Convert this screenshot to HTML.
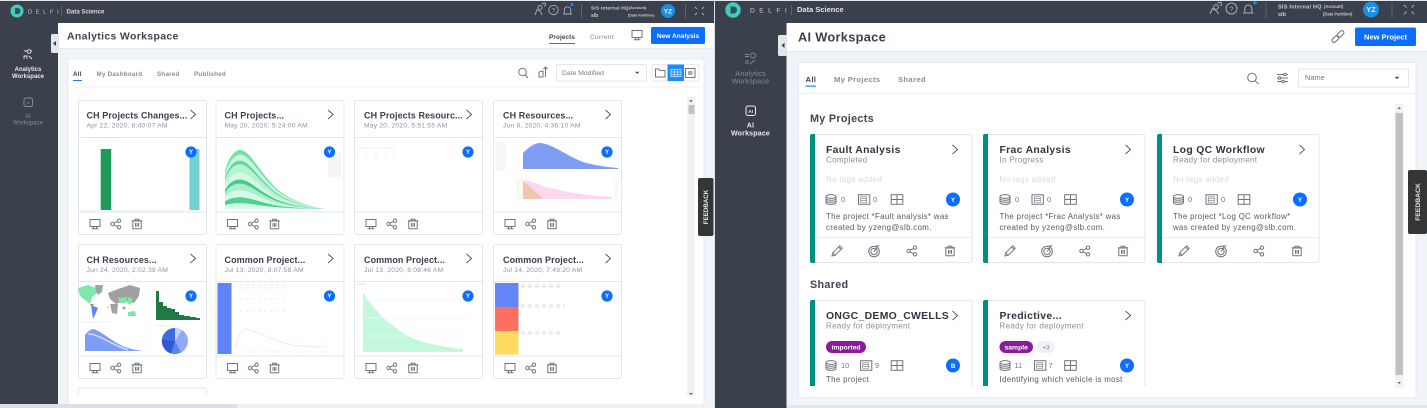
<!DOCTYPE html>
<html lang="en"><head><meta charset="utf-8"><title>Workspaces</title>
<style>
html,body{margin:0;padding:0;width:1427px;height:408px;overflow:hidden;background:#f0f3f8}
svg{display:block;font-family:"Liberation Sans",sans-serif;filter:blur(.3px)}
.t{font-size:9px;font-weight:700;fill:#3a414d;letter-spacing:.08px}
.d{font-size:6.7px;fill:#8d929b;letter-spacing:.22px}
.tab{font-size:6.3px;font-weight:700;fill:#8a8f97;letter-spacing:.2px}
.rtab{font-size:7.7px;font-weight:700;fill:#8a8f97;letter-spacing:.3px}
.rt{font-size:10.4px;font-weight:700;fill:#30363f;letter-spacing:.33px}
.rs{font-size:8px;fill:#8a8f98;letter-spacing:.3px}
.rn{font-size:8px;fill:#d6dae0;letter-spacing:.3px}
.rd{font-size:7.9px;fill:#555a63;letter-spacing:.33px}
.rc{font-size:7.4px;fill:#70757e}
.av{font-size:6px;font-weight:700;fill:#fff;text-anchor:middle}
.ic{fill:none;stroke:#6f747d;stroke-width:1}
</style></head><body>
<svg width="1427" height="408" viewBox="0 0 1427 408" xmlns="http://www.w3.org/2000/svg">
<defs>
<g id="mon" class="ic"><rect x="-5" y="-4.5" width="10" height="7"/><path d="M-1.5 2.5V4.5M1.5 2.5V4.5M-3.5 4.7H3.5"/></g>
<g id="share" class="ic"><circle cx="-3.5" cy="0" r="1.7"/><circle cx="3" cy="-3.3" r="1.7"/><circle cx="3" cy="3.3" r="1.7"/><path d="M-2 -.8L1.5 -2.6M-2 .8L1.5 2.6"/></g>
<g id="trash" class="ic"><rect x="-4.2" y="-3" width="8.4" height="7.800" rx=".6"/><path d="M-5.200 -3.2H5.200M-2 -3.2V-4.8H2V-3.2M-1.5 -1V2.7M1.500 -1V2.7M0 -1V2.7"/></g>
<g id="pen" class="ic"><path d="M-5 5L-4.200 1.700L2.700 -5.200L5.200 -2.700L-1.700 4.200ZM-4.200 1.700L-1.700 4.200M1.500 -4L4 -1.500"/></g>
<g id="gauge" class="ic"><circle cx="0" cy=".5" r="5.300"/><circle cx="0" cy=".5" r="3.200"/><path d="M0 .5L3.200 -3.800M2 -5.300L5.500 -5"/></g>
<g id="db" class="ic"><ellipse cx="0" cy="-3" rx="5" ry="1.900"/><path d="M-5 -3V3C-5 5.500 5 5.500 5 3V-3M-5 -1C-5 1.300 5 1.300 5 -1M-5 1C-5 3.300 5 3.300 5 1"/></g>
<g id="doc" class="ic"><path d="M-5.500 -4.800H5.800V4.800H-5.500Z"/><path d="M-3.300 -2.700H2.800V3H-3.300ZM-3.300 -.8H2.800M-3.300 1.100H2.800" stroke-width=".6"/></g>
<g id="grd" class="ic"><rect x="-5.800" y="-4.800" width="11.600" height="9.600"/><path d="M0 -4.800V4.800M-5.800 0H5.800"/></g>
<g id="chev"><path d="M-2.500 -4.500L2.500 0L-2.500 4.500" fill="none" stroke="#555b64" stroke-width="1"/></g>
<g id="lcard"><rect x=".5" y=".5" width="128" height="134" rx="2" fill="#fff" stroke="#e2e5eb"/>
<path d="M1 37.500H128M1 112H128" stroke="#e2e5eb"/>
<use href="#mon" x="17" y="124"/><use href="#share" x="38" y="124"/><use href="#trash" x="59" y="124"/><use href="#chev" x="115" y="14.500"/></g>
<g id="rcard"><rect x=".5" y=".5" width="161.500" height="128" rx="2" fill="#fff" stroke="#e2e5eb"/>
<path d="M5 0H2Q0 0 0 2V127Q0 129 2 129H5Z" fill="#00907f"/><use href="#chev" x="145" y="15.500"/></g>
<g id="rcard2"><path d="M.5 86V2Q.5 .5 2 .5H160.500Q162 .5 162 2V86Z" fill="#fff"/><path d="M.5 86V2Q.5 .5 2 .5H160.500Q162 .5 162 2V86" fill="none" stroke="#e2e5eb"/>
<path d="M5 0H2Q0 0 0 2V86H5Z" fill="#00907f"/><use href="#chev" x="145" y="15.500"/></g>
<g id="rfoot"><path d="M5 103.500H162" stroke="#e8ebf0"/><use href="#pen" x="27" y="117"/><use href="#gauge" x="64" y="117"/><use href="#share" x="102" y="117"/><use href="#trash" x="140" y="117"/></g>
<path id="bell" d="M0 0V-38C3 -50 9 -59 15 -59C25 -59 32 -40 50 -22C62 -10 82 -3 100 0Z"/>
</defs>

<!-- LEFT PANEL -->
<rect x="0" y="0" width="714" height="408" fill="#f0f3f8"/>
<rect x="0" y="1" width="714" height="22" fill="#3a414d"/>
<rect x="0" y="0" width="714" height="1" fill="#e6e7ea"/>
<rect x="0" y="22" width="58" height="382" fill="#3a414d"/>
<circle cx="17" cy="11" r="6.500" fill="#42cdb8"/><path d="M15 8H17.500A3 3 0 0 1 17.500 14H15Z" fill="#36505a"/>
<text x="28" y="13.500" font-size="5.600" fill="#c9ccd2" letter-spacing="3.700">DELFI</text>
<path d="M61.500 6V16" stroke="#5b636f"/>
<text x="66.500" y="13.500" font-size="6.100" font-weight="700" fill="#d8dbdf">Data Science</text>
<g fill="none" stroke="#a9aeb6" stroke-width=".9"><circle cx="540" cy="7.500" r="2"/><path d="M535 15L537 9.500L540.500 11.500M540.500 11.500L542 15M542.500 4.500A1.500 1.500 0 1 1 544 6"/><circle cx="553.500" cy="10" r="4.700"/><path d="M563 14H572M564.300 14V10A3.200 3.200 0 0 1 570.700 10V14"/></g>
<text x="553.500" y="12.300" font-size="6.500" fill="#a9aeb6" text-anchor="middle">?</text>
<circle cx="572" cy="4.500" r="1.700" fill="#1a7ff0"/>
<path d="M581.500 4V18M685.500 4V18" stroke="#5b636f"/>
<text x="591" y="9.600" font-size="4.900" fill="#c9ccd2" font-weight="700" letter-spacing=".15">SIS Internal HQ</text>
<text x="629" y="9.200" font-size="3.700" fill="#c9ccd2" font-weight="700">(Account)</text>
<text x="591" y="16.800" font-size="5" fill="#c9ccd2" font-weight="700">slb</text>
<text x="628" y="16.400" font-size="3.700" fill="#c9ccd2" font-weight="700">(Data Partition)</text>
<circle cx="668" cy="11" r="7" fill="#1a8fe3"/><text x="668" y="13.300" font-size="6.400" font-weight="700" fill="#e8f4fd" text-anchor="middle">YZ</text>
<path d="M695 7L697 9M704 7L702 9M695 15L697 13M704 15L702 13" stroke="#a9aeb6" fill="none"/>

<rect x="58" y="23" width="656" height="25" fill="#fff"/>
<path d="M58 48.500H714" stroke="#e6e9ee"/>
<rect x="51" y="34" width="8" height="19" rx="1.500" fill="#e4e6ea"/><path d="M56 41L53 43.500L56 46Z" fill="#39404b"/>
<text x="67" y="39.500" font-size="10.500" font-weight="700" fill="#3e4550" letter-spacing=".33">Analytics Workspace</text>
<text x="549" y="39" font-size="6.300" font-weight="700" fill="#3a414d" letter-spacing=".15">Projects</text>
<rect x="549" y="43" width="26" height="1" fill="#1a7ff0"/>
<text x="590" y="39" font-size="6.300" font-weight="700" fill="#a5a9b1" letter-spacing=".15">Current</text>
<use href="#mon" x="637" y="35"/>
<rect x="651" y="27" width="54" height="17" rx="1.500" fill="#0d6efd"/>
<text x="678" y="38" font-size="6.600" font-weight="700" fill="#fff" text-anchor="middle">New Analysis</text>

<g fill="none" stroke="#e8eaed" stroke-width=".9"><path d="M24 51H27M30.500 51H32M24 59V56H27V59M29 56L32 59"/><circle cx="29" cy="51.500" r="1.800"/></g>
<g font-size="6" font-weight="700" fill="#e6e8eb" text-anchor="middle"><text x="28" y="71.200">Analytics</text><text x="28" y="77.800">Workspace</text></g>
<rect x="24" y="98" width="8.500" height="8.500" rx="2" fill="none" stroke="#868c95"/><text x="28.200" y="104" font-size="4" fill="#868c95" text-anchor="middle">AI</text>
<g font-size="6" fill="#868c95" text-anchor="middle"><text x="28" y="118">AI</text><text x="28" y="124.500">Workspace</text></g>

<rect x="68" y="59" width="636" height="346" fill="#fff" stroke="#e7eaef"/>
<path d="M68 87H704" stroke="#eef0f4"/>
<text x="73" y="76" class="tab" style="fill:#3a414d">All</text>
<rect x="73" y="80" width="9" height="1" fill="#1a7ff0"/>
<text x="96.500" y="76" class="tab">My Dashboard</text><text x="157" y="76" class="tab">Shared</text><text x="194" y="76" class="tab">Published</text>
<g class="ic"><circle cx="522.500" cy="72" r="3.800"/><path d="M525.300 75L528 78"/><path d="M539 77V72L543 71V77ZM545.500 77V67M543.500 69L545.500 67L547.500 69"/></g>
<rect x="556.500" y="64.500" width="90" height="16.500" rx="1.500" fill="#fff" stroke="#e4e7ec"/>
<text x="562" y="75" font-size="6.800" fill="#777c85">Date Modified</text><path d="M635 71.700H639.500L637.200 74Z" fill="#4d525a"/>
<rect x="652" y="64.500" width="47" height="16.500" rx="1.500" fill="#fff" stroke="#e6e8ed"/>
<path d="M655.500 77V69H659L660 70.500H665V77Z" class="ic"/>
<rect x="667.500" y="64.500" width="16.500" height="16.500" fill="#1a8cff"/>
<path d="M671 69.500H681V76.500H671ZM671 72H681M671 74.300H681M674.300 69.500V76.500M677.700 69.500V76.500" fill="none" stroke="#d6ebff" stroke-width=".7"/>
<rect x="685.500" y="68.500" width="9.500" height="9" class="ic"/><rect x="688" y="71" width="4.500" height="4" fill="#a4a8ae"/>
<rect x="687" y="97" width="8" height="299" fill="#f2f2f2"/><rect x="688.500" y="105" width="6" height="9" fill="#c1c1c1"/>
<path d="M689 101.500L691 99.500L693 101.500ZM689 393L691 395L693 393Z" fill="#606060"/>

<!-- left cards row 1 -->
<g transform="translate(78,100)"><use href="#lcard"/><text x="8.500" y="18.500" class="t">CH Projects Changes...</text><text x="8.500" y="27.500" class="d">Apr 22, 2020, 8:40:07 AM</text></g>
<g transform="translate(215.500,100)"><use href="#lcard"/><text x="9" y="18.500" class="t">CH Projects...</text><text x="9" y="27.500" class="d">May 20, 2020, 5:24:00 AM</text></g>
<g transform="translate(354,100)"><use href="#lcard"/><text x="10" y="18.500" class="t">CH Projects Resourc...</text><text x="10" y="27.500" class="d">May 20, 2020, 5:51:55 AM</text></g>
<g transform="translate(493,100)"><use href="#lcard"/><text x="10" y="18.500" class="t">CH Resources...</text><text x="10" y="27.500" class="d">Jun 8, 2020, 4:36:10 AM</text></g>
<!-- charts row 1 -->
<rect x="100.700" y="149" width="10.500" height="61" fill="#1f9c5a"/>
<rect x="189.500" y="149" width="10" height="61" fill="#70d0d2"/>
<path d="M80 210.500H200M82 141H120" stroke="#f0f2f3" stroke-width=".7"/>
<g transform="translate(225,209)">
<use href="#bell" fill="#72e2aa"/><use href="#bell" fill="#c8f6de" transform="scale(1,.92)"/><use href="#bell" fill="#5fd699" transform="scale(.98,.82)"/><use href="#bell" fill="#b5f2d2" transform="scale(.98,.76)"/><use href="#bell" fill="#d5f9e6" transform="scale(.97,.62)"/><use href="#bell" fill="#4cc98a" transform="scale(.97,.5)"/><use href="#bell" fill="#a5efc9" transform="scale(.96,.43)"/><use href="#bell" fill="#d5f9e6" transform="scale(.96,.32)"/><use href="#bell" fill="#52cf91" transform="scale(.95,.2)"/><use href="#bell" fill="#d5f9e6" transform="scale(.95,.1)"/>
</g>
<path d="M328 152H341V177H328Z" fill="#f5f5f5"/>
<path d="M358 148H395M357 150V158M366 150V158M376 150V158M386 150V158M394 150V158" stroke="#eeeeee" stroke-width=".8" fill="none"/>
<path d="M523 169V153C530 146 535 143 540 143C553 144 565 155 583 162C597 166 608 167 618 168V169Z" fill="#7f9df5"/>
<path d="M495 142H506V170H495Z" fill="#f6f6f7"/>
<path d="M523 199V180C533 181 540 186 550 188C565 192 590 196 612 197V199Z" fill="#fbd7f0"/>
<path d="M523 199V182C530 185 537 194 543 199Z" fill="#f0c7ae"/>
<path d="M516 178H523V199H516ZM615 179H618V199H615Z" fill="#fbf8ee"/>
<!-- avatars row 1 -->
<g fill="#0d6efd"><circle cx="191" cy="152" r="5.600"/><circle cx="329.500" cy="152" r="5.600"/><circle cx="468" cy="152" r="5.600"/><circle cx="607" cy="152" r="5.600"/></g>
<g class="av"><text x="191" y="154.200">Y</text><text x="329.500" y="154.200">Y</text><text x="468" y="154.200">Y</text><text x="607" y="154.200">Y</text></g>

<!-- left cards row 2 -->
<g transform="translate(78,244)"><use href="#lcard"/><text x="8.500" y="19" class="t">CH Resources...</text><text x="8.500" y="28" class="d">Jun 24, 2020, 2:02:39 AM</text></g>
<g transform="translate(215.500,244)"><use href="#lcard"/><text x="9" y="19" class="t">Common Project...</text><text x="9" y="28" class="d">Jul 13, 2020, 8:07:58 AM</text></g>
<g transform="translate(354,244)"><use href="#lcard"/><text x="10" y="19" class="t">Common Project...</text><text x="10" y="28" class="d">Jul 13, 2020, 8:08:46 AM</text></g>
<g transform="translate(493,244)"><use href="#lcard"/><text x="10" y="19" class="t">Common Project...</text><text x="10" y="28" class="d">Jul 14, 2020, 7:49:20 AM</text></g>
<!-- map card -->
<path d="M78 288L88 285L96 288L97 293L92 297L90 304L85 300L80 296Z" fill="#7ce8ab"/>
<path d="M95 285H103L102 292L98 295L96 291Z" fill="#a2a2a2"/>
<path d="M91 305L98 308L95 315L93 319L92 312Z" fill="#5c86f0"/><path d="M90 304L94 304L92 308Z" fill="#999"/>
<path d="M108 293L118 289L130 285L140 288L139 296L134 303L124 301L116 304L110 299Z" fill="#a0a0a0"/>
<path d="M118 298L127 297L126 303L120 303ZM128 297L133 299L130 305L127 303Z" fill="#7ce8ab"/>
<path d="M110 304L118 304L117 314L112 313Z" fill="#a2a2a2"/>
<path d="M128 312L135 311L136 316L128 316Z" fill="#7ce8ab"/><circle cx="124" cy="308" r="1.500" fill="#f3887a"/><circle cx="108" cy="307" r="1" fill="#f3c26a"/>
<path d="M156 291H159V320H156ZM159 302H163V320H159ZM163 306H167V320H163ZM167 308H171V320H167ZM171 309H175V320H171ZM175 312H179V320H175ZM179 315H184V320H179ZM184 316H190V320H184ZM190 317H196V320H190ZM196 318H200V320H196Z" fill="#1f7a45"/>
<path d="M85 351V335C88 331 91 329 94 329C104 333 115 344 128 348C134 350 138 350 142 351Z" fill="#7d9ef5"/>
<path d="M88 334C97 333 110 344 128 350" stroke="#cfdcfc" fill="none" stroke-width="1.500"/>
<path d="M80 322H110M155 326H178" stroke="#eceeef" stroke-width=".7"/>
<circle cx="175" cy="341" r="13" fill="#8fabf8"/><path d="M175 341V328A13 13 0 0 1 182 330Z" fill="#c5d3fb"/><path d="M175 341L162 339A13 13 0 0 0 171 353.500Z" fill="#2f58d4"/><path d="M175 328A13 13 0 0 0 162 339L175 341Z" fill="#3e6ae0"/><path d="M175 341L171 353.500A13 13 0 0 0 181 352.500Z" fill="#5d82ea"/>
<path d="M147 322V356" stroke="#f2f3f4" stroke-width=".6"/>
<!-- card 2 -->
<rect x="217.500" y="283" width="14" height="71" fill="#5f84f7"/>
<path d="M236 348C238 335 241 329 246 329C258 330 275 344 300 346C313 347 322 347 327 347" fill="none" stroke="#fde5d9" stroke-width="1"/>
<path d="M240 285H285M240 288H285M240 299H285M240 311H285M236 352H330" stroke="#f0f1f2" stroke-width="1.200" stroke-dasharray="3 3"/>
<!-- card 3 -->
<path d="M363 352V292C375 312 395 332 420 341C440 347 455 348 463 349V352Z" fill="#c4f8dd"/>
<path d="M357 284H366" stroke="#e4e5e6"/>
<path d="M362 300H470M362 318H470M362 336H470" stroke="#f4f5f5" stroke-width=".7"/>
<!-- card 4 -->
<rect x="495" y="283" width="23.500" height="24" fill="#6485f8"/><rect x="495" y="307" width="23.500" height="24" fill="#fc7060"/><rect x="495" y="331" width="23.500" height="23.500" fill="#fddb60"/>
<path d="M521 286H562M521 306H565M521 333H562" stroke="#ebeced" stroke-width="3.500" stroke-dasharray="4 3"/>
<g fill="#0d6efd"><circle cx="191" cy="296" r="5.600"/><circle cx="329.500" cy="296" r="5.600"/><circle cx="468" cy="296" r="5.600"/><circle cx="607" cy="296" r="5.600"/></g>
<g class="av"><text x="191" y="298.200">Y</text><text x="329.500" y="298.200">Y</text><text x="468" y="298.200">Y</text><text x="607" y="298.200">Y</text></g>
<!-- partial row 3 -->
<path d="M78 396V390Q78 388 80 388H204.500Q206.500 388 206.500 390V396" fill="#fff" stroke="#e2e5eb"/>
<!-- feedback left -->
<rect x="698" y="178" width="15.500" height="58" rx="2" fill="#333537"/>
<text transform="translate(708,207) rotate(-90)" font-size="6.200" font-weight="700" fill="#e8e8e8" text-anchor="middle">FEEDBACK</text>
<!-- bottom scrollbar -->
<rect x="0" y="404" width="714" height="4" fill="#f1f1f1"/><rect x="0" y="404" width="237" height="4" fill="#dcdfe3"/>

<!-- RIGHT PANEL -->
<rect x="714" y="0" width="1" height="408" fill="#dfe2e6"/>
<rect x="715" y="0" width="712" height="408" fill="#f0f3f8"/>
<rect x="715" y="1" width="712" height="22" fill="#3a414d"/>
<rect x="715" y="0" width="712" height="1" fill="#e6e7ea"/>
<rect x="715" y="22" width="71.500" height="386" fill="#3a414d"/>
<circle cx="733" cy="10" r="7.700" fill="#42cdb8"/><path d="M730.500 6.500H733.500A3.500 3.500 0 0 1 733.500 13.500H730.500Z" fill="#36505a"/>
<text x="750" y="12.500" font-size="6.600" fill="#c9ccd2" letter-spacing="4.500">DELFI</text>
<path d="M791.500 5V15" stroke="#5b636f"/>
<text x="797" y="12" font-size="7.500" fill="#dfe2e5" font-weight="700">Data Science</text>
<g fill="none" stroke="#a9aeb6" stroke-width="1"><circle cx="1216" cy="7" r="2.300"/><path d="M1210 14L1212.500 8.500L1216.500 11M1216.500 11L1218.500 14M1218 3.800A1.800 1.800 0 1 1 1220.200 5.800"/><circle cx="1231.500" cy="8.500" r="5.500"/><path d="M1243 13H1253.500M1244.800 13V8.500A3.500 3.500 0 0 1 1251.800 8.500V13"/></g>
<text x="1231.500" y="11.300" font-size="7.500" fill="#a9aeb6" text-anchor="middle">?</text>
<circle cx="1255" cy="2.800" r="1.900" fill="#1a7ff0"/>
<path d="M1266 2V18M1392 2V18" stroke="#5b636f"/>
<text x="1278" y="8.500" font-size="5.500" fill="#c9ccd2" font-weight="700" letter-spacing=".25">SIS Internal HQ</text>
<text x="1324" y="8" font-size="4.100" fill="#c9ccd2" font-weight="700">(Account)</text>
<text x="1278" y="15.800" font-size="5.500" fill="#c9ccd2" font-weight="700">slb</text>
<text x="1323" y="15.500" font-size="4.100" fill="#c9ccd2" font-weight="700">(Data Partition)</text>
<circle cx="1371" cy="9.500" r="8" fill="#1a8fe3"/><text x="1371" y="12" font-size="7.200" font-weight="700" fill="#e8f4fd" text-anchor="middle">YZ</text>
<path d="M1404 5L1406.500 7.500M1414 5L1411.500 7.500M1404 14L1406.500 11.500M1414 14L1411.500 11.500" stroke="#a9aeb6" fill="none"/>

<rect x="786.500" y="23" width="640.500" height="28" fill="#fff"/><path d="M786.500 51.500H1427" stroke="#e4e7ec"/>
<rect x="778" y="35" width="9" height="21" rx="1.500" fill="#e4e6ea"/><path d="M784.500 42.500L781.500 45.500L784.500 48Z" fill="#39404b"/>
<text x="798" y="41.500" font-size="12.800" font-weight="700" fill="#3a414d" letter-spacing=".3">AI Workspace</text>
<g transform="translate(1338,36.500) rotate(-45)" fill="none" stroke="#7c8189" stroke-width="1.200"><rect x="-7.500" y="-2" width="8" height="4" rx="2"/><rect x="-.5" y="-2" width="8" height="4" rx="2"/></g>
<rect x="1355" y="27.500" width="61" height="18.500" rx="1.500" fill="#0d6efd"/>
<text x="1385.500" y="39.500" font-size="7.500" font-weight="700" fill="#fff" text-anchor="middle">New Project</text>

<g fill="none" stroke="#858b94" stroke-width=".9"><path d="M745 54.500H749M745 56.500H749M746 60V64M748 60V64M750 64L755 60"/><circle cx="753" cy="55.500" r="2.500"/></g>
<g font-size="7.200" fill="#858b94" text-anchor="middle" letter-spacing=".2"><text x="750.500" y="76">Analytics</text><text x="750.500" y="83.500">Workspace</text></g>
<rect x="746" y="106" width="9.500" height="9.500" rx="2" fill="none" stroke="#eaecee"/><text x="750.700" y="113" font-size="4.600" font-weight="700" fill="#eaecee" text-anchor="middle">AI</text>
<g font-size="7" font-weight="700" fill="#e8eaed" text-anchor="middle" letter-spacing=".2"><text x="750.500" y="127.500">AI</text><text x="750.500" y="135.500">Workspace</text></g>

<rect x="798.500" y="62.500" width="617.500" height="335" fill="#fff" stroke="#e7eaef"/>
<path d="M799 93.500H1416" stroke="#eef0f4"/>
<text x="805.500" y="81.800" class="rtab" style="fill:#3a414d">All</text><rect x="805.500" y="85.500" width="10.500" height="1.200" fill="#1a8cff"/>
<text x="834" y="81.800" class="rtab">My Projects</text><text x="898" y="81.800" class="rtab">Shared</text>
<g class="ic"><circle cx="1252" cy="77.500" r="4.300"/><path d="M1255 80.700L1258.500 84"/><path d="M1277 74.500H1288M1277 78H1288M1277 81.500H1288"/><circle cx="1285" cy="74.500" r="1.300" fill="#fff"/><circle cx="1279.500" cy="78" r="1.300" fill="#fff"/><circle cx="1283" cy="81.500" r="1.300" fill="#fff"/></g>
<rect x="1298.500" y="69" width="110" height="18" rx="1.500" fill="#fff" stroke="#e2e5ea"/>
<text x="1305" y="80" font-size="7.400" fill="#777c85">Name</text><path d="M1394.500 76.800H1399.500L1397 79.200Z" fill="#4d525a"/>
<rect x="1395" y="104" width="8.500" height="284" fill="#f2f2f2"/><rect x="1395.500" y="113" width="7.500" height="262" fill="#c1c1c1"/>
<path d="M1397.500 109L1399.200 107L1401 109ZM1397.500 382L1399.200 384L1401 382Z" fill="#606060"/>

<text x="810" y="122" font-size="10.800" font-weight="700" fill="#3e4550" letter-spacing=".3">My Projects</text>
<text x="810" y="288" font-size="10.800" font-weight="700" fill="#3e4550" letter-spacing=".3">Shared</text>

<g transform="translate(810,134)"><use href="#rcard"/><use href="#rfoot"/>
<text x="16" y="19" class="rt">Fault Analysis</text><text x="16" y="28.500" class="rs">Completed</text><text x="16" y="48" class="rn">No tags added</text>
<use href="#db" x="21" y="65.500"/><text x="31" y="68" class="rc">0</text><use href="#doc" x="54" y="65.500"/><text x="63" y="68" class="rc">0</text><use href="#grd" x="87" y="65.500"/>
<circle cx="143" cy="65.500" r="7" fill="#0d6efd"/><text x="143" y="67.800" class="av">Y</text>
<text x="16" y="85" class="rd">The project *Fault analysis* was</text><text x="16" y="96" class="rd">created by yzeng@slb.com.</text></g>

<g transform="translate(983,134)"><use href="#rcard"/><use href="#rfoot"/>
<text x="16.500" y="19" class="rt">Frac Analysis</text><text x="16.500" y="28.500" class="rs">In Progress</text><text x="16.500" y="48" class="rn">No tags added</text>
<use href="#db" x="22" y="65.500"/><text x="32" y="68" class="rc">0</text><use href="#doc" x="54.500" y="65.500"/><text x="64" y="68" class="rc">0</text><use href="#grd" x="87.500" y="65.500"/>
<circle cx="144" cy="65.500" r="7" fill="#0d6efd"/><text x="144" y="67.800" class="av">Y</text>
<text x="16.500" y="85" class="rd">The project *Frac Analysis* was</text><text x="16.500" y="96" class="rd">created by yzeng@slb.com.</text></g>

<g transform="translate(1157,134)"><use href="#rcard"/><use href="#rfoot"/>
<text x="16" y="19" class="rt">Log QC Workflow</text><text x="16" y="28.500" class="rs">Ready for deployment</text><text x="16" y="48" class="rn">No tags added</text>
<use href="#db" x="21.500" y="65.500"/><text x="31" y="68" class="rc">0</text><use href="#doc" x="54.500" y="65.500"/><text x="64" y="68" class="rc">0</text><use href="#grd" x="87" y="65.500"/>
<circle cx="143" cy="65.500" r="7" fill="#0d6efd"/><text x="143" y="67.800" class="av">Y</text>
<text x="16" y="85" class="rd">The project *Log QC workflow*</text><text x="16" y="96" class="rd">was created by yzeng@slb.com.</text></g>

<g transform="translate(810,300)"><use href="#rcard2"/>
<text x="16" y="19" class="rt">ONGC_DEMO_CWELLS</text><text x="16" y="28.500" class="rs">Ready for deployment</text>
<rect x="16" y="41" width="40" height="12" rx="6" fill="#8a1c9c"/><text x="36" y="49.700" font-size="6.800" fill="#fff" text-anchor="middle" font-weight="700">imported</text>
<use href="#db" x="21" y="65.500"/><text x="31" y="68" class="rc">10</text><use href="#doc" x="56" y="65.500"/><text x="65" y="68" class="rc">9</text><use href="#grd" x="87" y="65.500"/>
<circle cx="143" cy="65.500" r="7" fill="#0d6efd"/><text x="143" y="67.800" class="av">B</text>
<text x="16" y="82" class="rd">The project</text></g>
<g transform="translate(983,300)"><use href="#rcard2"/>
<text x="16.500" y="19" class="rt">Predictive...</text><text x="16.500" y="28.500" class="rs">Ready for deployment</text>
<rect x="16.500" y="41" width="33.500" height="12" rx="6" fill="#8a1c9c"/><text x="33.200" y="49.700" font-size="6.800" fill="#fff" text-anchor="middle" font-weight="700">sample</text>
<rect x="54" y="41" width="18" height="12" rx="6" fill="#f0f2f6"/><text x="63" y="49.500" font-size="6.200" fill="#777c85" text-anchor="middle">+3</text>
<use href="#db" x="22" y="65.500"/><text x="31.500" y="68" class="rc">11</text><use href="#doc" x="57" y="65.500"/><text x="65.500" y="68" class="rc">7</text><use href="#grd" x="87.500" y="65.500"/>
<circle cx="144" cy="65.500" r="7" fill="#0d6efd"/><text x="144" y="67.800" class="av">Y</text>
<text x="16.500" y="82" class="rd">Identifying which vehicle is most</text></g>

<rect x="1408" y="170" width="19" height="64" rx="2" fill="#333537"/>
<text transform="translate(1420,202) rotate(-90)" font-size="6.800" font-weight="700" fill="#e8e8e8" text-anchor="middle">FEEDBACK</text>
<rect x="786.500" y="405" width="640.500" height="3" fill="#e4e6ea"/>
</svg>
</body></html>
